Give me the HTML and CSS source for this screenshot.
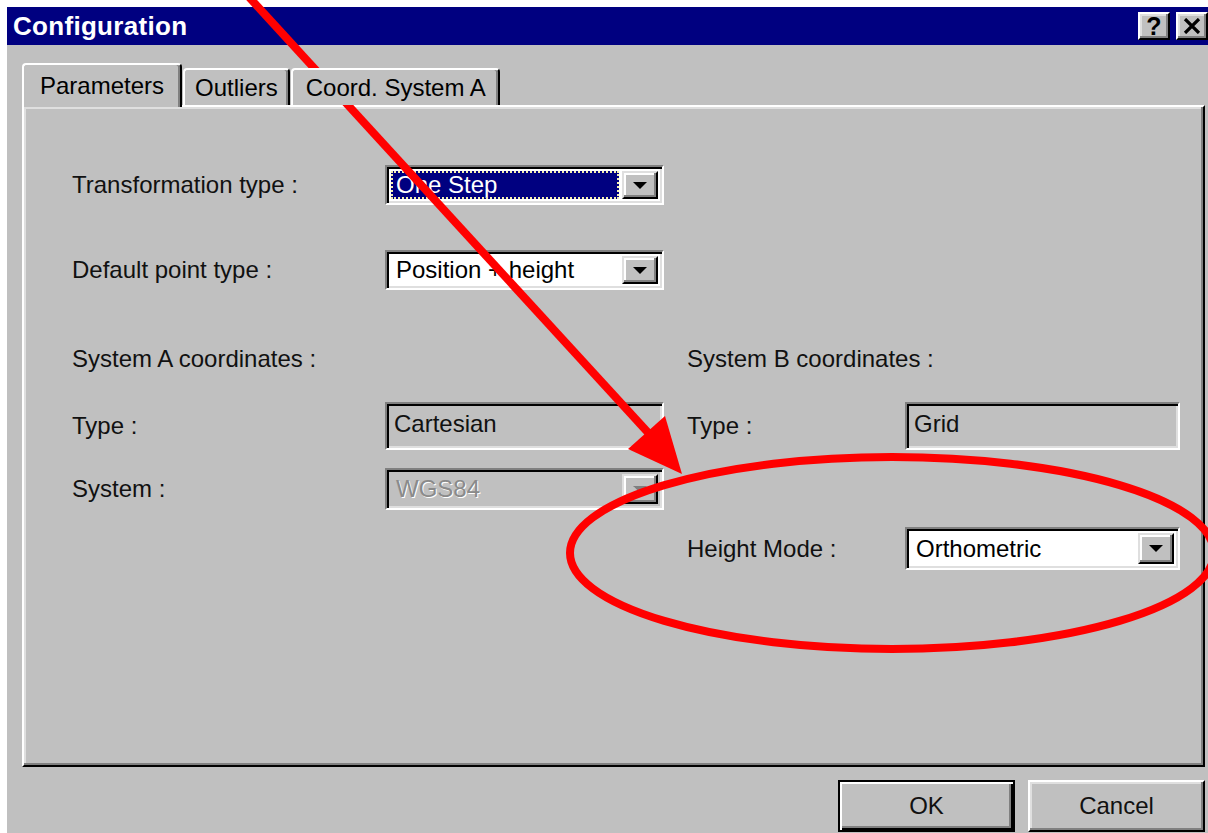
FILE: index.html
```html
<!DOCTYPE html>
<html>
<head>
<meta charset="utf-8">
<title>Configuration</title>
<link rel="stylesheet" href="styles.css">
</head>
<body>
<div class="window">
  <div class="titlebar">
    <span class="title">Configuration</span>
    <div class="caption-buttons">
      <button class="cap-btn help">?</button>
      <button class="cap-btn close" aria-label="Close">
        <svg width="18" height="16" viewBox="0 0 18 16"><path d="M2 1 L16 15 M16 1 L2 15" stroke="#000" stroke-width="3.2" fill="none"/></svg>
      </button>
    </div>
  </div>

  <div class="content">
    <div class="tabs">
      <div class="tab active">Parameters</div>
      <div class="tab">Outliers</div>
      <div class="tab wide">Coord. System A</div>
    </div>

    <div class="panel">
      <div class="row row-1">
        <span class="label">Transformation type :</span>
        <div class="combo"><span class="value selected">One Step</span><span class="drop"></span></div>
      </div>

      <div class="row row-2">
        <span class="label">Default point type :</span>
        <div class="combo"><span class="value">Position + height</span><span class="drop"></span></div>
      </div>

      <div class="row row-3">
        <span class="label span-a">System A coordinates :</span>
        <span class="label col-b-label">System B coordinates :</span>
      </div>

      <div class="row row-4">
        <span class="label">Type :</span>
        <div class="edit">Cartesian</div>
        <span class="label col-b-label">Type :</span>
        <div class="edit col-b-field">Grid</div>
      </div>

      <div class="row row-5">
        <span class="label">System :</span>
        <div class="combo disabled"><span class="value">WGS84</span><span class="drop"></span></div>
      </div>

      <div class="row row-6">
        <span class="label col-b-label">Height Mode :</span>
        <div class="combo col-b-field"><span class="value">Orthometric</span><span class="drop"></span></div>
      </div>
    </div>

    <div class="footer">
      <button class="btn default">OK</button>
      <button class="btn">Cancel</button>
    </div>
  </div>
</div>

<svg class="markup" width="1208" height="833" viewBox="0 0 1208 833">
  <line x1="248" y1="-4" x2="664" y2="450" stroke="#f00" stroke-width="8"/>
  <polygon points="628,449 665,416 682,474" fill="#f00"/>
  <ellipse cx="892" cy="553" rx="322" ry="96" fill="none" stroke="#f00" stroke-width="8"/>
</svg>
</body>
</html>
```

FILE: styles.css
```css
* {
  box-sizing: border-box;
}

html, body {
  margin: 0;
}

body {
  position: relative;
  width: 1208px;
  height: 833px;
  overflow: hidden;
  background: #fff;
  font-family: "Liberation Sans", Arial, sans-serif;
  font-size: 24px;
  color: #000;
}

/* dialog frame */
.window {
  margin: 7px 0 0 7px;
  width: 1205px;
  height: 840px;
  background: #c0c0c0;
}

.titlebar {
  height: 38px;
  background: #000080;
  display: flex;
  align-items: center;
  justify-content: space-between;
  padding: 0 4px 0 6px;
}

.title {
  color: #fff;
  font-weight: bold;
  font-size: 26px;
  letter-spacing: 0.3px;
}

.caption-buttons {
  display: flex;
  gap: 6px;
}

.cap-btn {
  width: 32px;
  height: 28px;
  padding: 0;
  display: flex;
  align-items: center;
  justify-content: center;
  background: #c0c0c0;
  border: 2px solid;
  border-color: #fff #000 #000 #fff;
  box-shadow: inset -2px -2px #808080, inset 2px 2px #dfdfdf;
  font-family: "Liberation Sans", Arial, sans-serif;
  font-weight: bold;
  font-size: 25px;
  line-height: 1;
  color: #000;
}

.content {
  padding: 18px 7px 0 15px;
}

/* tab strip */
.tabs {
  position: relative;
  z-index: 1;
  display: flex;
  align-items: flex-end;
  gap: 1px;
  height: 44px;
  margin-bottom: -2px;
}

.tab {
  height: 37px;
  margin-bottom: 2px;
  padding: 0 10px;
  display: flex;
  align-items: center;
  background: #c0c0c0;
  border: 2px solid;
  border-bottom: none;
  border-color: #fff #000 transparent #fff;
  border-radius: 4px 4px 0 0;
  box-shadow: inset -2px 0 #808080;
}

.tab.wide {
  padding: 0 12px 0 13px;
}

.tab.active {
  height: 44px;
  margin-bottom: 0;
  padding: 0 16px;
}

/* page body of the tab control */
.panel {
  height: 662px;
  padding-left: 48px;
  border: 2px solid;
  border-color: #fff #000 #000 #fff;
  box-shadow: inset -2px -2px #808080, inset 2px 2px #dfdfdf;
}

.row {
  display: grid;
  grid-template-columns: 313px 279px 22px 219px 275px;
  align-items: center;
}

.row-1 { margin-top: 58px; height: 40px; }
.row-2 { margin-top: 45px; height: 40px; }
.row-3 { margin-top: 55px; height: 25px; }
.row-4 { margin-top: 32px; height: 48px; }
.row-5 { margin-top: 18px; height: 42px; }
.row-6 { margin-top: 17px; height: 43px; }

.label {
  grid-column: 1;
  white-space: nowrap;
  color: #111;
}

.span-a {
  grid-column: 1 / 3;
}

.col-b-label {
  grid-column: 4;
  padding-left: 1px;
}

.col-b-field {
  grid-column: 5;
}

/* sunken controls */
.combo,
.edit {
  height: 100%;
  border: 2px solid;
  border-color: #808080 #fff #fff #808080;
  box-shadow: inset 2px 2px #000, inset -2px -2px #dfdfdf;
}

.combo {
  display: flex;
  padding: 4px;
  background: #fff;
}

.combo .value {
  flex: 1;
  display: flex;
  align-items: center;
  margin-right: 3px;
  padding-left: 5px;
  white-space: nowrap;
}

.combo .value.selected {
  background: #000080;
  color: #fff;
  outline: 2px dotted #f4f0b0;
  outline-offset: -2px;
}

.drop {
  width: 36px;
  display: flex;
  align-items: center;
  justify-content: center;
  background: #c0c0c0;
  border: 2px solid;
  border-color: #dfdfdf #000 #000 #dfdfdf;
  box-shadow: inset -2px -2px #808080, inset 2px 2px #fff;
}

.drop::after {
  content: "";
  border-left: 7px solid transparent;
  border-right: 7px solid transparent;
  border-top: 7px solid #000;
}

.combo.disabled {
  background: #c0c0c0;
}

.combo.disabled .value {
  color: #8a8a8a;
  text-shadow: 1px 1px #fff;
}

.combo.disabled .drop::after {
  border-top-color: #808080;
  filter: drop-shadow(1px 1px #fff);
}

.edit {
  padding: 6px 7px;
  line-height: 28px;
  background: #c0c0c0;
  color: #111;
}

/* dialog buttons */
.footer {
  display: flex;
  justify-content: flex-end;
  gap: 13px;
  padding-top: 13px;
}

.btn {
  width: 177px;
  height: 52px;
  font-family: "Liberation Sans", Arial, sans-serif;
  font-size: 24px;
  color: #111;
  background: #c0c0c0;
  border: 2px solid;
  border-color: #fff #000 #000 #fff;
  box-shadow: inset -2px -2px #808080, inset 2px 2px #dfdfdf;
}

.btn.default {
  border-color: #000;
  box-shadow: inset 2px 2px #fff, inset -2px -2px #000, inset -4px -4px #808080;
}

/* red annotation drawn over the dialog */
.markup {
  position: absolute;
  top: 0;
  left: 0;
  pointer-events: none;
}
```
